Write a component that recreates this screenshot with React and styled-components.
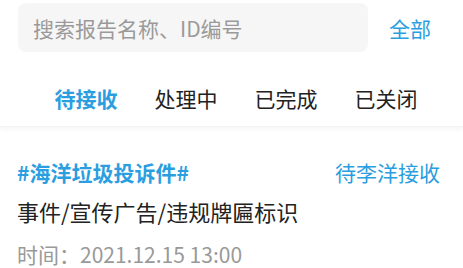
import React, { useState } from "react";
import styled, { createGlobalStyle } from "styled-components";

const tabs = ["待接收", "处理中", "已完成", "已关闭"];

export default function App() {
  const [active, setActive] = useState(0);
  return (
    <PageDiv>
      <GlobalStyle />
      {/* 검색 영역 */}
      <SearchRowDiv>
        <SearchBoxDiv>
          <SearchInput placeholder="搜索报告名称、ID编号" />
        </SearchBoxDiv>
        <AllBtn>全部</AllBtn>
      </SearchRowDiv>
      {/* 탭 */}
      <TabBarDiv>
        {tabs.map((t, i) => (
          <TabBtn key={t} active={i === active} onClick={() => setActive(i)}>
            {t}
          </TabBtn>
        ))}
      </TabBarDiv>
      {/* 리스트 카드 */}
      <CardDiv>
        <CardHeadDiv>
          <CardTitle>#海洋垃圾投诉件#</CardTitle>
          <CardStatus>待李洋接收</CardStatus>
        </CardHeadDiv>
        <CardCategory>事件/宣传广告/违规牌匾标识</CardCategory>
        <CardTime>时间：2021.12.15 13:00</CardTime>
      </CardDiv>
    </PageDiv>
  );
}

const GlobalStyle = createGlobalStyle`
  body {
    margin: 0;
    background: #fff;
    font-family: "Noto Sans CJK SC", "Noto Sans", sans-serif;
  }
`;

const PageDiv = styled.div`
  width: 463px;
  height: 268px;
  overflow: hidden;
  background: #fff;
`;

const SearchRowDiv = styled.div`
  display: flex;
  align-items: center;
  padding: 3px 0 0 18px;
`;

const SearchBoxDiv = styled.div`
  width: 350px;
  height: 49px;
  background: #f6f6f6;
  border-radius: 8px;
  display: flex;
  align-items: center;
  padding-left: 15px;
  box-sizing: border-box;
`;

const SearchInput = styled.input`
  border: none;
  background: transparent;
  outline: none;
  width: 100%;
  font-family: inherit;
  font-size: 21px;
  color: #333;
  padding: 0;
  &::placeholder {
    color: #9a9a9a;
  }
`;

const AllBtn = styled.button`
  border: none;
  background: none;
  padding: 0;
  margin-left: 21px;
  font-family: inherit;
  font-size: 21px;
  color: #2b9ee0;
`;

const TabBarDiv = styled.div`
  display: flex;
  padding: 18px 0 0 36px;
  height: 56px;
  box-sizing: content-box;
  align-items: center;
  box-shadow: 0 3px 4px rgba(0, 0, 0, 0.035);
  border-bottom: 1px solid #f3f3f3;
`;

const TabBtn = styled.button`
  width: 100px;
  border: none;
  background: none;
  padding: 0;
  font-family: inherit;
  font-size: 21px;
  font-weight: ${(props) => (props.active ? 700 : 400)};
  color: ${(props) => (props.active ? "#2b9ee0" : "#222")};
`;

const CardDiv = styled.div`
  padding: 28px 23px 0 17px;
  display: flex;
  flex-direction: column;
`;

const CardHeadDiv = styled.div`
  display: flex;
  justify-content: space-between;
  align-items: center;
  height: 34px;
`;

const CardTitle = styled.span`
  font-size: 21px;
  font-weight: 700;
  color: #2b9ee0;
`;

const CardStatus = styled.span`
  font-size: 21px;
  color: #2b9ee0;
`;

const CardCategory = styled.div`
  margin-top: 5px;
  height: 34px;
  line-height: 34px;
  font-size: 22px;
  color: #222;
`;

const CardTime = styled.div`
  margin-top: 14px;
  height: 24px;
  line-height: 24px;
  font-size: 21px;
  color: #999;
`;
